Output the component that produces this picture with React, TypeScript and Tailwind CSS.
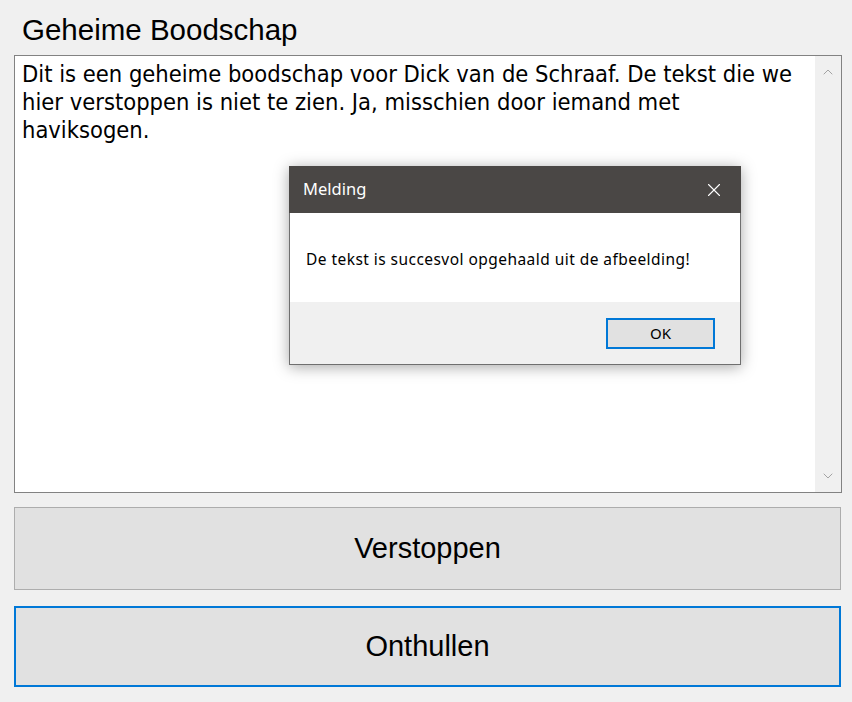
import { X, ChevronUp, ChevronDown } from 'lucide-react';

const message = [
  'Dit is een geheime boodschap voor Dick van de Schraaf. De tekst die we',
  'hier verstoppen is niet te zien. Ja, misschien door iemand met',
  'haviksogen.',
];

function MessageDialog() {
  return (
    <div className="absolute left-[289px] top-[166px] w-[452px] shadow-[0_2px_14px_rgba(0,0,0,0.35)] font-['Noto_Sans',sans-serif]">
      <div className="h-[47px] bg-[#4a4745] flex items-center justify-between pl-[14px] pr-[16px]">
        <span className="text-white text-[16.5px]">Melding</span>
        <X className="w-[22px] h-[22px] text-white" strokeWidth={1.2} />
      </div>
      <div className="bg-white border-x border-[#6f6f6f] h-[89px] flex items-center pl-[16px] pt-[4px]">
        <span className="text-[15.5px] tracking-[0.45px] text-black">De tekst is succesvol opgehaald uit de afbeelding!</span>
      </div>
      <div className="bg-[#f0f0f0] border-x border-b border-[#6f6f6f] h-[63px] flex items-start justify-end pt-[16px] pr-[25px]">
        <button className="w-[109px] h-[31px] bg-[#e1e1e1] border-2 border-[#0078d7] text-[15px] text-black">
          OK
        </button>
      </div>
    </div>
  );
}

export default function App() {
  return (
    <div className="relative w-[852px] h-[702px] bg-[#f0f0f0] font-['Liberation_Sans',Arial,sans-serif] overflow-hidden">
      <div className="pl-[14px] pr-[10px] pt-[13px]">
        <h1 className="pl-[8px] text-[29.5px] leading-[34px] text-black">Geheime Boodschap</h1>
        <div className="mt-[8px] h-[438px] bg-white border border-[#828282] flex">
          <div className="flex-1 px-[7px] pt-[4px] font-['DejaVu_Sans_Condensed','DejaVu_Sans',sans-serif] text-[23.5px] leading-[28px] text-black">
            {message.map((line) => (
              <div key={line} className="whitespace-nowrap">{line}</div>
            ))}
          </div>
          <div className="w-[26px] bg-[#f0f0f0] flex flex-col items-center justify-between py-[8px]">
            <ChevronUp className="w-[16px] h-[16px] text-[#a3a3a3]" strokeWidth={1.5} />
            <ChevronDown className="w-[16px] h-[16px] text-[#a3a3a3]" strokeWidth={1.5} />
          </div>
        </div>
      </div>
      <div className="pl-[14px] pr-[11px] pt-[14px] flex flex-col gap-[16px]">
        <button className="h-[83px] bg-[#e1e1e1] border border-[#adadad] text-[29px] text-black">
          Verstoppen
        </button>
        <button className="h-[81px] bg-[#e1e1e1] border-2 border-[#0078d7] text-[29px] text-black">
          Onthullen
        </button>
      </div>
      <MessageDialog />
    </div>
  );
}
